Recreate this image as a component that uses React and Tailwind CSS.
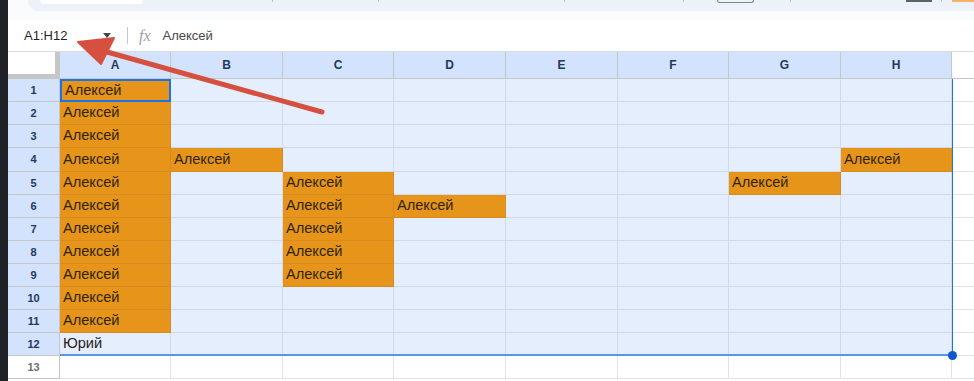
import React from "react";

const COLS = ["A", "B", "C", "D", "E", "F", "G", "H"];
const ROW_H = [23, 23, 23, 24, 23, 23, 23, 23, 23, 23, 23, 23, 23];

const DATA = {
  1: ["A"],
  2: ["A"],
  3: ["A"],
  4: ["A", "B", "H"],
  5: ["A", "C", "G"],
  6: ["A", "C", "D"],
  7: ["A", "C"],
  8: ["A", "C"],
  9: ["A", "C"],
  10: ["A"],
  11: ["A"],
};

function Tick({ ml }) {
  return <div className="w-px h-[2px] bg-[#b9bdc4]" style={{ marginLeft: ml }} />;
}

export default function App() {
  const font = { fontFamily: '"Liberation Sans", Arial, sans-serif' };
  const cells = [];

  cells.push(
    <div key="corner" className="bg-white border-r-[5px] border-b-[5px] border-[#c4c7c5]" />
  );
  COLS.forEach((c) => {
    cells.push(
      <div
        key={"h" + c}
        className="bg-[#d3e3fd] border-r border-b border-[#c4c7c5] flex items-center justify-center text-[12px] font-bold text-[#23385a]"
      >
        {c}
      </div>
    );
  });
  cells.push(<div key="hI" className="bg-white border-b border-[#c4c7c5]" />);

  for (let r = 1; r <= 13; r++) {
    const sel = r <= 12;
    cells.push(
      <div
        key={"r" + r}
        className={
          sel
            ? "bg-[#d3e3fd] border-r border-b border-[#c4c7c5] flex items-center justify-center text-[11px] font-bold text-[#23385a]"
            : "bg-white border-r border-b border-[#c4c7c5] flex items-center justify-center text-[11px] font-bold text-[#6b6f75]"
        }
      >
        {r}
      </div>
    );
    COLS.forEach((c) => {
      const orange = DATA[r] && DATA[r].includes(c);
      const active = r === 1 && c === "A";
      const yuri = r === 12 && c === "A";
      let cls =
        "flex items-center pl-[3px] text-[14.6px] overflow-hidden whitespace-nowrap ";
      if (active) {
        cls += "bg-[#e7941b] border-2 border-[#1a73e8] pl-[1px] text-[#2d2410]";
      } else if (orange) {
        cls += "bg-[#e7941b] border-r border-b border-[#d68a1f] text-[#2d2410]";
      } else if (sel) {
        cls += "bg-[#e5eefc] border-r border-b border-[#d2dae6] text-[#261a1a]";
      } else {
        cls += "bg-white border-r border-b border-[#e1e3e6]";
      }
      cells.push(
        <div key={c + r} className={cls}>
          {orange ? "Алексей" : yuri ? "Юрий" : ""}
        </div>
      );
    });
    cells.push(
      <div key={"I" + r} className="bg-white border-b border-[#e1e3e6]" />
    );
  }

  return (
    <div className="w-[974px] h-[381px] overflow-hidden flex relative bg-white" style={font}>
      <div className="w-[8px] bg-[#1f2227] shrink-0" />
      <div className="flex-1 flex flex-col">
        <div className="h-[20px] bg-[#f9fbfd] flex">
          <div className="ml-[20px] flex-1 h-[11px] bg-[#edf2fa] rounded-bl-[14px] flex items-start">
            <div className="ml-[12px] w-[103px] h-[4px] bg-white rounded-b-[6px]" />
            <Tick ml={129} />
            <Tick ml={105} />
            <Tick ml={185} />
            <Tick ml={118} />
            <div className="ml-[33px] w-[37px] h-[3px] border-x border-b border-[#80868b] rounded-b-[3px]" />
            <Tick ml={36} />
            <div className="ml-[115px] w-[26px] h-[2px] bg-[#5f6368]" />
            <Tick ml={9} />
            <div className="ml-[10px] flex-1 h-[2px] bg-[#f6b26b]" />
          </div>
        </div>
        <div className="h-[32px] bg-white border-b border-[#dadce0] flex items-center">
          <div className="ml-[16px] w-[70px] text-[13px] text-[#1f1f1f]">A1:H12</div>
          <div className="ml-[9px] w-0 h-0 border-x-[4px] border-x-transparent border-t-[5px] border-t-[#444746]" />
          <div className="ml-[16px] w-px h-[17px] bg-[#c4c7c5]" />
          <div
            className="ml-[11px] text-[16px] italic text-[#9aa0a6]"
            style={{ fontFamily: '"Liberation Serif", serif' }}
          >
            fx
          </div>
          <div className="ml-[12px] text-[13px] text-[#444746]">Алексей</div>
        </div>
        <div className="relative">
          <div
            className="grid"
            style={{
              gridTemplateColumns: "52px 111px 112px 111px 112px 112px 111px 112px 111px 22px",
              gridTemplateRows: "27px " + ROW_H.map((h) => h + "px").join(" "),
            }}
          >
            {cells}
          </div>
          <div className="absolute left-[52px] top-[27px] w-[893px] h-[277px] border-r border-b-2 border-r-[#1a73e8] border-b-[#5b93ef] pointer-events-none" />
          <div className="absolute left-[940px] top-[299px] w-[9px] h-[9px] rounded-full bg-[#0b57d0]" />
        </div>
      </div>
      <svg className="absolute left-0 top-0 pointer-events-none" width="974" height="381">
        <line x1="322" y1="112" x2="100" y2="50" stroke="#d6503f" strokeWidth="5" strokeLinecap="round" />
        <polygon points="78,42 114,38 101,64" fill="#d6503f" stroke="#d6503f" strokeWidth="2" strokeLinejoin="round" />
      </svg>
    </div>
  );
}
